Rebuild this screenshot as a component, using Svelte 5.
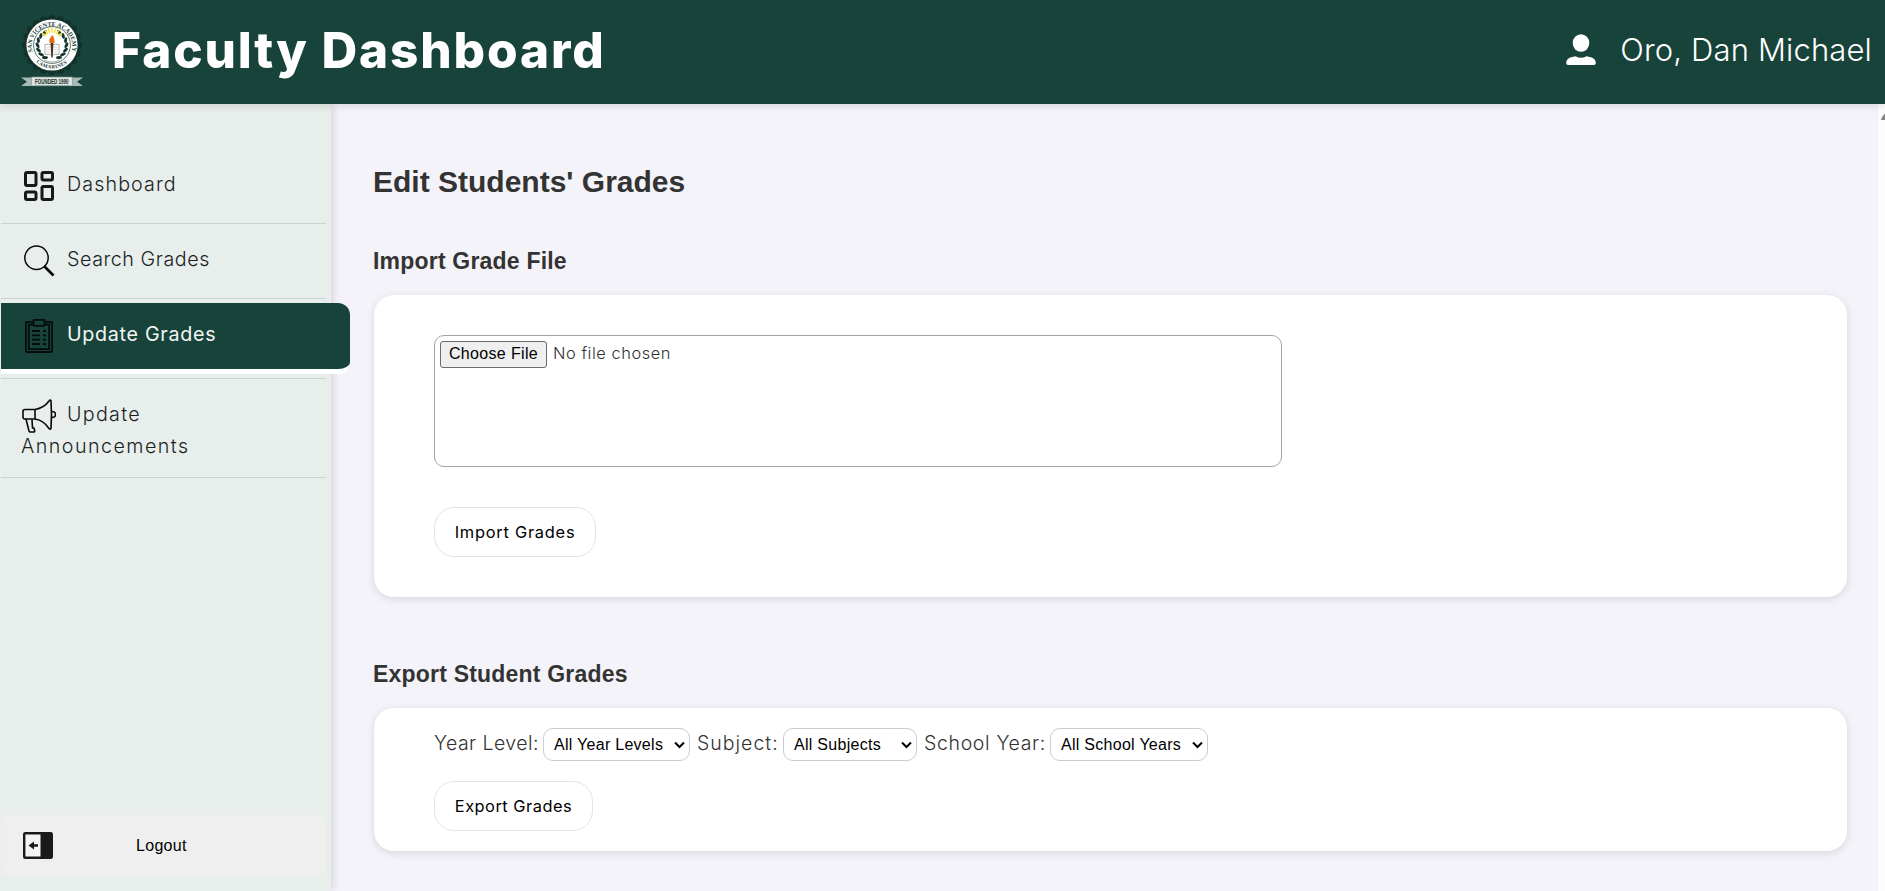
<script>
  const filters = [
    { label: 'Year Level:', value: 'All Year Levels', cls: 'year' },
    { label: 'Subject:', value: 'All Subjects', cls: 'subject' },
    { label: 'School Year:', value: 'All School Years', cls: 'school' }
  ];
  const teeth = Array.from({ length: 20 }, (_, i) => (i * Math.PI) / 10);
  const leaves = [-60, -40, -20, 0, 20, 40, 60];
  const rays = [-150, -130, -110, -90, -70, -50, -30];
</script>

<div class="page">
  <header>
    <svg class="logo" width="62" height="72" viewBox="0 0 62 72">
      {#each teeth as a}
        <circle cx={31 + 26 * Math.cos(a)} cy={30 + 26 * Math.sin(a)} r="4" fill="#12332c" />
      {/each}
      <circle cx="31" cy="30" r="27" fill="#12332c" />
      <circle cx="31" cy="30" r="25.6" fill="#fff" />
      <circle cx="31" cy="30" r="18.4" fill="none" stroke="#173b33" stroke-width=".7" />
      <defs>
        <path id="arc-top" d="M11.500 37A20.300 20.300 0 1 1 50.500 37" />
        <path id="arc-low" d="M15 47A23 23 0 0 0 47 47" />
      </defs>
      <text class="seal"><textPath href="#arc-top" textLength="74" lengthAdjust="spacingAndGlyphs">SAN VICENTE ACADEMY</textPath></text>
      <text class="seal low"><textPath href="#arc-low" textLength="34">CAMARINES</textPath></text>
      {#each leaves as a}
        <ellipse cx="16.500" cy="30" rx="1.500" ry="3" fill="#17362f" transform="rotate({a} 31 30) rotate(-28 17 30)" />
        <ellipse cx="45.500" cy="30" rx="1.500" ry="3" fill="#17362f" transform="rotate({a} 31 30) rotate(28 45 30)" />
      {/each}
      {#each rays as a}
        <path d="M37.500 24h5" stroke="#f7e43c" stroke-width="1.500" transform="rotate({a} 31 24)" />
      {/each}
      <path d="M24 29.500q4-1 7 .8 3-1.800 7-.8v10q-4-1-7 .8-3-1.800-7-.8z" fill="#fff" stroke="#83908b" stroke-width=".7" />
      <path d="M25.500 32h4M25.500 34.500h4M25.500 37h4M32.500 32h4M32.500 34.500h4M32.500 37h4" stroke="#aab2af" stroke-width=".5" />
      <path d="M29.500 27h3l-.8 15.500h-1.400z" fill="#5a2c1b" />
      <path d="M28.800 28q-1.500-4 1-5.500.2-1.500 1.300-2.500 3 3.500 2.300 8z" fill="#ea6d16" />
      <path d="M23 45q8 4 16 0" fill="none" stroke="#718079" stroke-width=".6" />
      <path d="M0 62.500h14V71H0l6-4.200zM62 62.500H48V71h14l-6-4.200z" fill="#a9b9b4" />
      <path d="M10.500 62h41v8.800h-41z" fill="#dce3e0" stroke="#7d918b" stroke-width=".6" />
      <text class="founded" x="14" y="68.800" textLength="33.500" lengthAdjust="spacingAndGlyphs">FOUNDED 1990</text>
    </svg>
    <h1>Faculty Dashboard</h1>
    <div class="user">
      <svg width="30" height="32" viewBox="0 0 30 32" fill="#fff">
        <ellipse cx="15" cy="9" rx="8.300" ry="8.800" />
        <path d="M.2 29q0-4 4-5.500l5.300-1.300q5.500 3.200 11 0l5.300 1.300q4 1.500 4 5.500 0 2-2 2H2.200q-2 0-2-2z" />
      </svg>
      <span>Oro, Dan Michael</span>
    </div>
  </header>

  <div class="body">
    <aside>
      <nav>
        <a class="item first" href="#dashboard">
          <svg width="30" height="30" viewBox="0 0 30 30" fill="none" stroke="#181818" stroke-width="3">
            <rect x="1.500" y="1.500" width="10.500" height="13" rx="1.500" /><rect x="18" y="1.500" width="10.500" height="7.500" rx="1.500" />
            <rect x="1.500" y="21" width="10.500" height="7.500" rx="1.500" /><rect x="18" y="15.500" width="10.500" height="13" rx="1.500" />
          </svg>
          <span class="t-dash">Dashboard</span>
        </a>
        <a class="item second" href="#search">
          <svg width="31" height="32" viewBox="0 0 31 32" fill="none" stroke="#080808">
            <circle cx="12.500" cy="12.800" r="11.700" stroke-width="1.500" />
            <path d="M20.500 21.500l9 9" stroke-width="2.700" />
          </svg>
          <span class="t-search">Search Grades</span>
        </a>
        <div class="active-wrap">
          <a class="active" href="#update">
            <svg width="28" height="34" viewBox="0 0 28 34" fill="none" stroke="#050b0a" stroke-width="1.800">
              <rect x=".8" y="2.800" width="26.400" height="30.200" rx="1.200" />
              <path d="M8 5.500H3.800v24.700h20.400V5.500H20" />
              <rect x="8.500" y=".8" width="11" height="6" rx="1" fill="#17433b" />
              <path d="M7 12h8M18 12h3M7 16.300h8M18 16.300h3M7 20.600h8M18 20.600h3M7 25h8M18 25h3" />
            </svg>
            <span class="t-grades">Update Grades</span>
          </a>
        </div>
        <a class="item fourth" href="#announcements">
          <svg width="34" height="34" viewBox="0 0 34 34" fill="none" stroke="#080808" stroke-width="1.600" stroke-linejoin="round">
            <path d="M13 10.500H3q-2 0-2 2v5.500q0 2 2 2h10zM13 10.500Q22 9 27 2q1-1.500 2-.5 1 14 0 28-1 1.500-2 0-5-8-14-9.500" />
            <path d="M30 12.500q3.500 0 3.500 3t-3.500 3M4 20l3 12q.3 1 1.300 1h3.200q1.500 0 1.200-1.300L12 29h-1.500L10 20.500" />
          </svg>
          <span class="t-up">Update</span>
          <span class="t-ann">Announcements</span>
        </a>
      </nav>
      <button class="logout">
        <svg width="30" height="27" viewBox="0 0 30 27">
          <rect x="1.200" y="1.200" width="27.600" height="24.600" rx="1" fill="#f4f4f4" stroke="#1a1a1a" stroke-width="2.400" />
          <path d="M17.500 1h11.500v25H17.500z" fill="#1a1a1a" />
          <path d="M15 12.200h-4V9.500l-5.500 4 5.500 4v-2.700h4z" fill="#1a1a1a" />
        </svg>
        <span>Logout</span>
      </button>
    </aside>

    <main>
      <h2>Edit Students' Grades</h2>
      <h3>Import Grade File</h3>
      <section class="card import">
        <div class="file">
          <button class="choose">Choose File</button>
          <span>No file chosen</span>
        </div>
        <button class="pill imp"><span>Import Grades</span></button>
      </section>
      <h3 class="h-export">Export Student Grades</h3>
      <section class="card export">
        <div class="filters">
          {#each filters as f}
            <span class="lab {f.cls}">{f.label}</span>
            <button class="select {f.cls}">
              {f.value}
              <svg width="11" height="8" viewBox="0 0 11 8"><path d="M1 1.500l4.500 4.500L10 1.500" fill="none" stroke="#000" stroke-width="2" /></svg>
            </button>
          {/each}
        </div>
        <button class="pill exp"><span>Export Grades</span></button>
      </section>
    </main>
    <div class="scroll"><svg width="7" height="7" viewBox="0 0 7 7"><path d="M0 7q0-2 1.500-3.500L4.500 0H7v7z" fill="#858585" /></svg></div>
  </div>
</div>

<style>
  :global(body) { margin: 0; }
  * { box-sizing: border-box; }
  button { margin: 0; padding: 0; font-family: 'Liberation Sans', Arial, sans-serif; color: #000; }
  svg { display: block; flex: none; }
  span { white-space: nowrap; }
  .page { width: 100%; height: 891px; display: flex; flex-direction: column; overflow: hidden; background: #f4f3f9; font-family: Inter, sans-serif; }
  header { height: 104px; flex: none; background: #17433b; display: flex; align-items: flex-start; color: #fff; box-shadow: 0 2px 8px rgba(0, 0, 0, .12); z-index: 2; padding: 15px 13px 0 21px; }
  .logo { overflow: visible; }
  .seal { font: bold 6.200px 'Liberation Serif', serif; fill: #15352d; }
  .low { font-size: 5px; }
  .founded { font: bold 6.500px 'Liberation Sans', sans-serif; fill: #172e28; }
  h1 { margin: 5px 0 0 29px; font-size: 49.500px; line-height: 60px; font-weight: 800; letter-spacing: 1.850px; white-space: nowrap; }
  .user { margin-left: auto; display: flex; gap: 24px; padding-top: 18px; }
  .user svg { margin-top: 1px; }
  .user span { font-size: 31px; font-weight: 300; line-height: 34px; letter-spacing: .15px; }
  .body { flex: 1; min-height: 0; display: flex; }
  aside { width: 331px; flex: none; background: #e8eeec; box-shadow: 2px 0 8px rgba(0, 0, 0, .13); padding: 52px 5px 15px 1px; display: flex; flex-direction: column; }
  a { color: #1b1f1e; text-decoration: none; font-size: 19.700px; line-height: 32px; font-weight: 300; }
  .item { height: 75px; border-bottom: 1px solid #cbd2d0; display: flex; padding: 15px 0 0 23px; gap: 13px; }
  .item.first { height: 68px; }
  .first span { margin-top: -3px; letter-spacing: 1.100px; }
  .second svg { margin-top: 6px; }
  .second span { margin: 4px 0 0 -1px; letter-spacing: .55px; }
  .active-wrap { height: 80px; border-bottom: 1px solid #cbd2d0; padding-top: 4px; }
  .active { width: 349px; height: 71px; background: #17433b; color: #f2f6f5; border-bottom: 5px solid #fff; border-radius: 0 12px 12px 0; display: flex; padding: 16px 0 0 24px; gap: 14px; font-weight: 400; }
  .active span { margin-top: -1px; letter-spacing: .7px; }
  .item.fourth { height: 99px; flex-wrap: wrap; gap: 0 11px; align-content: flex-start; padding: 20px 0 0 21px; }
  .fourth .t-up { margin-top: -1px; letter-spacing: 1.300px; }
  .fourth .t-ann { flex-basis: 100%; margin: -3px 0 0 -1px; letter-spacing: 1.450px; }
  .logout { margin-top: auto; height: 61px; flex: none; border: 0; border-radius: 8px; background: #efefef; display: flex; align-items: center; padding-left: 22px; gap: 83px; font-size: 16px; letter-spacing: .3px; }
  main { flex: 1; padding: 60px 31px 0 43px; color: #333; }
  h2, h3 { font-family: 'Liberation Sans', Arial, sans-serif; white-space: nowrap; }
  h2 { margin: 0 0 0 -1px; font-size: 30px; line-height: 36px; }
  h3 { margin: 47px 0 19px -1px; font-size: 23px; line-height: 29px; letter-spacing: .2px; }
  h3.h-export { margin: 63px 0 19px -1px; }
  .card { background: #fff; border-radius: 20px; box-shadow: 0 2px 8px rgba(0, 0, 0, .12); padding-left: 60px; }
  .import { height: 302px; padding-top: 40px; }
  .file { width: 848px; height: 132px; border: 1px solid #a5a5a5; border-radius: 10px; padding: 5px; display: flex; align-items: flex-start; gap: 6px; }
  .choose { width: 107px; height: 27px; border: 1px solid #6b6b6b; border-radius: 3px; background: #efefef; font-size: 16px; line-height: 22px; padding-bottom: 2px; letter-spacing: .35px; }
  .file span { font-size: 16.400px; line-height: 25px; font-weight: 300; letter-spacing: .55px; }
  .pill { display: block; height: 50px; border: 1px solid #e4e4e4; border-radius: 20px; background: #fff; font-family: Inter, sans-serif; font-size: 16.400px; }
  .imp { width: 162px; margin-top: 40px; letter-spacing: .75px; }
  .exp { width: 159px; margin-top: 20px; letter-spacing: .5px; }
  .export { height: 143px; padding-top: 20px; }
  .filters { display: flex; height: 33px; }
  .lab { font-size: 19.500px; line-height: 31px; font-weight: 300; }
  .lab.year { width: 109px; letter-spacing: .45px; }
  .lab.subject { width: 93px; padding-left: 7px; letter-spacing: 1px; }
  .lab.school { width: 133px; padding-left: 7px; letter-spacing: .65px; }
  .select { height: 33px; border: 1px solid #ccc; border-radius: 10px; background: #fff; display: flex; align-items: center; justify-content: space-between; padding: 0 4px 0 10px; font-size: 16px; white-space: nowrap; letter-spacing: .28px; }
  .select.year { width: 147px; }
  .select.subject { width: 134px; }
  .select.school { width: 158px; }
  .scroll { width: 7px; background: #fcfcfc; padding: 9px 0 0 3px; overflow: hidden; }
</style>
